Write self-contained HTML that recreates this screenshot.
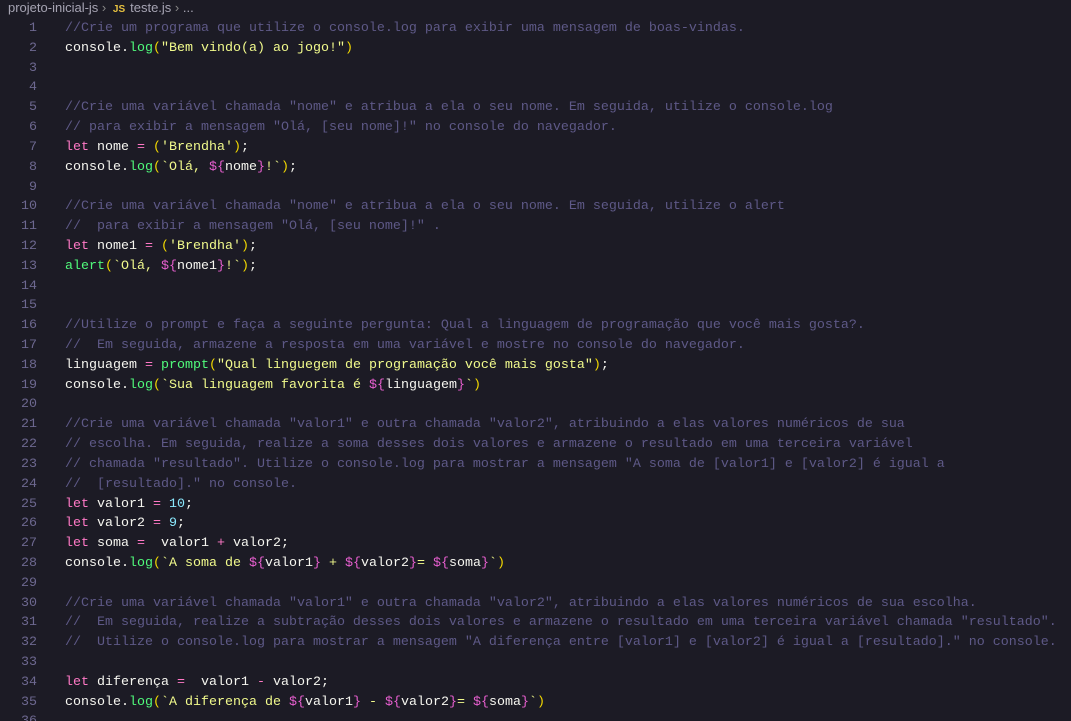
<!DOCTYPE html>
<html><head><meta charset="utf-8"><style>
html,body{margin:0;padding:0;background:#1c1b25;width:1071px;height:721px;overflow:hidden}
.bc{position:absolute;left:8px;top:0;height:18px;line-height:18px;font:13px "Liberation Sans",sans-serif;color:#a6a4b3;white-space:nowrap}
.bc .js{color:#e5c040;font-weight:bold;font-size:10px;margin:0 5px 0 3px}
.ed{position:absolute;left:0;top:19px;width:1071px;height:702px;overflow:hidden;font-family:"Liberation Mono",monospace;font-size:13.33px;line-height:19.82px;color:#f6f6f0}
.ln{position:absolute;left:0;top:0;width:37px;text-align:right;color:#6d6890;white-space:pre}
.cd{position:absolute;left:65px;top:0;white-space:pre}
.c{color:#5e5987}.k{color:#ff79c6}.f{color:#50fa7b}.s{color:#f1fa8c}.n{color:#8be9fd}.p{color:#f1d700}.t{color:#e85fd0}.o{color:#ff79c6}
</style></head><body>
<div class="bc">projeto-inicial-js <span style="color:#888">&#x203A;</span> <span class="js">JS</span>teste.js <span style="color:#888">&#x203A;</span> ...</div>
<div class="ed"><div class="ln">1
2
3
4
5
6
7
8
9
10
11
12
13
14
15
16
17
18
19
20
21
22
23
24
25
26
27
28
29
30
31
32
33
34
35
36</div><div class="cd"><span class="c">//Crie um programa que utilize o console.log para exibir uma mensagem de boas-vindas.</span>
console.<span class="f">log</span><span class="p">(</span><span class="s">"Bem vindo(a) ao jogo!"</span><span class="p">)</span>


<span class="c">//Crie uma variável chamada "nome" e atribua a ela o seu nome. Em seguida, utilize o console.log</span>
<span class="c">// para exibir a mensagem "Olá, [seu nome]!" no console do navegador.</span>
<span class="k">let</span> nome <span class="o">=</span> <span class="p">(</span><span class="s">'Brendha'</span><span class="p">)</span>;
console.<span class="f">log</span><span class="p">(</span><span class="s">`Olá, </span><span class="t">${</span>nome<span class="t">}</span><span class="s">!`</span><span class="p">)</span>;

<span class="c">//Crie uma variável chamada "nome" e atribua a ela o seu nome. Em seguida, utilize o alert</span>
<span class="c">//  para exibir a mensagem "Olá, [seu nome]!" .</span>
<span class="k">let</span> nome1 <span class="o">=</span> <span class="p">(</span><span class="s">'Brendha'</span><span class="p">)</span>;
<span class="f">alert</span><span class="p">(</span><span class="s">`Olá, </span><span class="t">${</span>nome1<span class="t">}</span><span class="s">!`</span><span class="p">)</span>;


<span class="c">//Utilize o prompt e faça a seguinte pergunta: Qual a linguagem de programação que você mais gosta?.</span>
<span class="c">//  Em seguida, armazene a resposta em uma variável e mostre no console do navegador.</span>
linguagem <span class="o">=</span> <span class="f">prompt</span><span class="p">(</span><span class="s">"Qual linguegem de programação você mais gosta"</span><span class="p">)</span>;
console.<span class="f">log</span><span class="p">(</span><span class="s">`Sua linguagem favorita é </span><span class="t">${</span>linguagem<span class="t">}</span><span class="s">`</span><span class="p">)</span>

<span class="c">//Crie uma variável chamada "valor1" e outra chamada "valor2", atribuindo a elas valores numéricos de sua</span>
<span class="c">// escolha. Em seguida, realize a soma desses dois valores e armazene o resultado em uma terceira variável</span>
<span class="c">// chamada "resultado". Utilize o console.log para mostrar a mensagem "A soma de [valor1] e [valor2] é igual a</span>
<span class="c">//  [resultado]." no console.</span>
<span class="k">let</span> valor1 <span class="o">=</span> <span class="n">10</span>;
<span class="k">let</span> valor2 <span class="o">=</span> <span class="n">9</span>;
<span class="k">let</span> soma <span class="o">=</span>  valor1 <span class="o">+</span> valor2;
console.<span class="f">log</span><span class="p">(</span><span class="s">`A soma de </span><span class="t">${</span>valor1<span class="t">}</span><span class="s"> + </span><span class="t">${</span>valor2<span class="t">}</span><span class="s">= </span><span class="t">${</span>soma<span class="t">}</span><span class="s">`</span><span class="p">)</span>

<span class="c">//Crie uma variável chamada "valor1" e outra chamada "valor2", atribuindo a elas valores numéricos de sua escolha.</span>
<span class="c">//  Em seguida, realize a subtração desses dois valores e armazene o resultado em uma terceira variável chamada "resultado".</span>
<span class="c">//  Utilize o console.log para mostrar a mensagem "A diferença entre [valor1] e [valor2] é igual a [resultado]." no console.</span>

<span class="k">let</span> diferença <span class="o">=</span>  valor1 <span class="o">-</span> valor2;
console.<span class="f">log</span><span class="p">(</span><span class="s">`A diferença de </span><span class="t">${</span>valor1<span class="t">}</span><span class="s"> - </span><span class="t">${</span>valor2<span class="t">}</span><span class="s">= </span><span class="t">${</span>soma<span class="t">}</span><span class="s">`</span><span class="p">)</span></div></div>
</body></html>
